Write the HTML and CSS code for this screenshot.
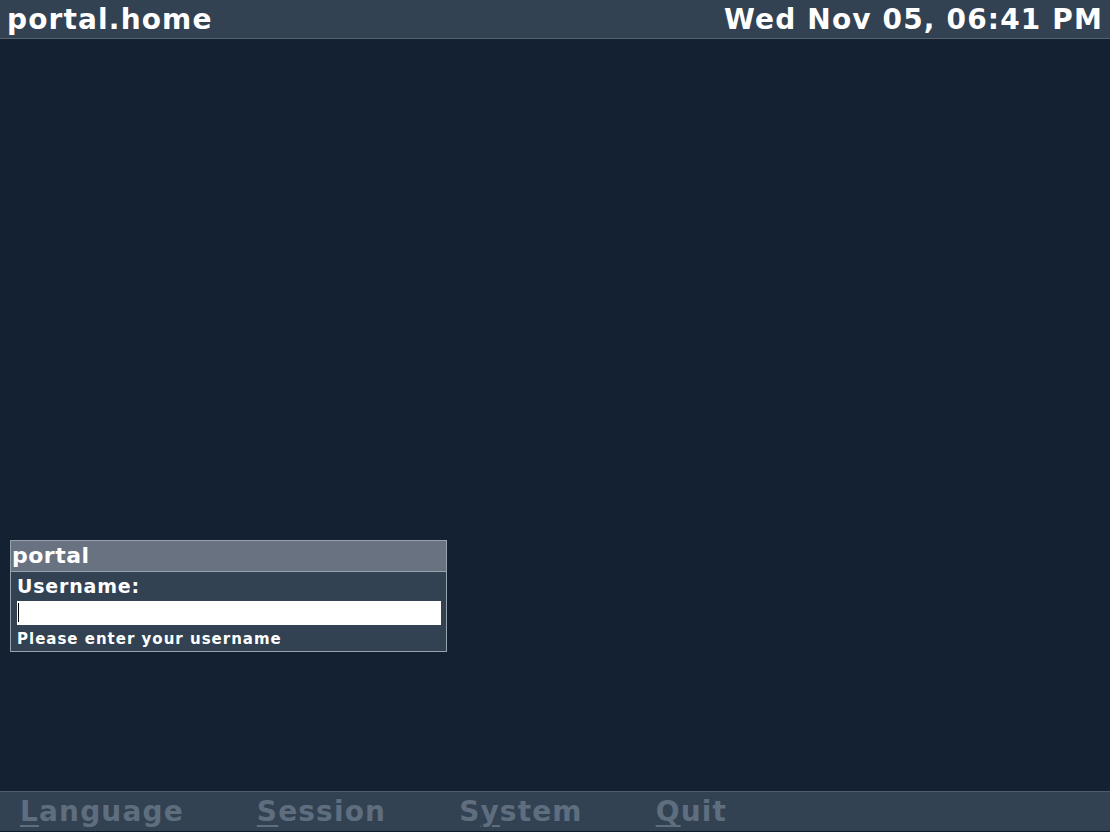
FILE: index.html
```html
<!DOCTYPE html>
<html lang="en">
    <head>
        <meta charset="UTF-8" />
        <title>portal.home</title>
        <link rel="stylesheet" href="styles.css">
    </head>
    <body>
        <div class="topbar">
            <div class="host">portal.home</div>
            <div class="clock">Wed Nov 05, 06:41 PM</div>
        </div>

        <div class="main">
            <div class="login">
                <div class="login-title">portal</div>
                <div class="login-body">
                    <label class="label" for="user">Username:</label>
                    <div class="field"><span class="caret"></span></div>
                    <div class="hint">Please enter your username</div>
                </div>
            </div>
        </div>

        <div class="menubar">
            <span class="item"><u>L</u>anguage</span>
            <span class="item"><u>S</u>ession</span>
            <span class="item">S<u>y</u>stem</span>
            <span class="item"><u>Q</u>uit</span>
        </div>
    </body>
</html>
```

FILE: styles.css
```css
* {
    margin: 0;
    padding: 0;
    box-sizing: border-box;
}

body {
    background-color: #132132;
    font-family: 'DejaVu Sans', sans-serif;
    font-weight: bold;
    color: #fff;
    display: flex;
    flex-direction: column;
    height: 100vh;
    overflow: hidden;
}

.topbar {
    background-color: #334253;
    border-bottom: 1px solid #56636f;
    height: 39px;
    display: flex;
    justify-content: space-between;
    align-items: center;
    padding: 0 7px 0 7px;
    font-size: 28px;
    line-height: 39px;
    letter-spacing: 1.15px;
}

.main {
    flex: 1;
    padding: 501px 0 0 10px;
}

.login {
    width: 437px;
    border: 1px solid #98a2ad;
    background-color: #334253;
}

.login-title {
    background-color: #687280;
    border-bottom: 1px solid #98a2ad;
    height: 31px;
    line-height: 30px;
    font-size: 22px;
    letter-spacing: 0.5px;
    padding-left: 1px;
}

.login-body {
    padding: 2px 5px 1px 6px;
}

.label {
    display: block;
    font-size: 19px;
    line-height: 24px;
    letter-spacing: 0.8px;
}

.field {
    background-color: #fff;
    height: 24px;
    margin-top: 3px;
    padding: 2px 0 0 1px;
}

.caret {
    display: block;
    width: 1px;
    height: 19px;
    background-color: #000;
}

.hint {
    font-size: 15px;
    line-height: 22px;
    padding-top: 3px;
    letter-spacing: 1px;
}

.menubar {
    background-color: #334253;
    border-top: 1px solid #4f5d6b;
    border-bottom: 1px solid #0f1b28;
    height: 41px;
    display: flex;
    align-items: center;
    gap: 73px;
    padding-left: 20px;
    font-size: 28px;
    letter-spacing: 1.15px;
    color: #5f6e7e;
}

.item u {
    text-decoration-thickness: 2px;
    text-underline-offset: 4px;
}
```
